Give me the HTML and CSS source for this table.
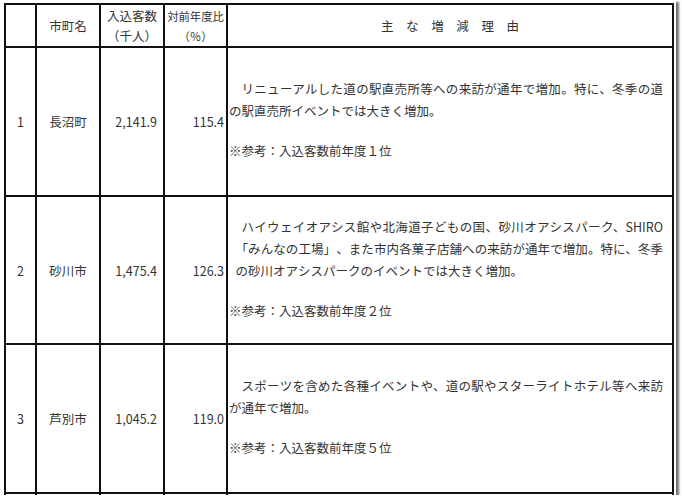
FILE: index.html
```html
<!DOCTYPE html>
<html lang="ja">
<head>
<meta charset="utf-8">
<title>入込客数 増加上位</title>
<link rel="stylesheet" href="styles.css">
</head>
<body>
<div class="frame">
  <table class="stats">
    <colgroup>
      <col class="c-rank">
      <col class="c-town">
      <col class="c-num">
      <col class="c-ratio">
      <col class="c-reason">
    </colgroup>
    <thead>
      <tr class="head">
        <th></th>
        <th>市町名</th>
        <th>入込客数<br>（千人）</th>
        <th class="narrow">対前年度比<br>（％）</th>
        <th class="spread">主な増減理由</th>
      </tr>
    </thead>
    <tbody>
      <tr class="row">
        <td class="rank">1</td>
        <td class="town">長沼町</td>
        <td class="num">2,141.9</td>
        <td class="ratio">115.4</td>
        <td class="reason">
          <p class="para">リニューアルした道の駅直売所等への来訪が通年で増加。特に、冬季の道の駅直売所イベントでは大きく増加。</p>
          <p class="note">※参考：入込客数前年度１位</p>
        </td>
      </tr>
      <tr class="row row-mid">
        <td class="rank">2</td>
        <td class="town">砂川市</td>
        <td class="num">1,475.4</td>
        <td class="ratio">126.3</td>
        <td class="reason">
          <p class="para para-shift">ハイウェイオアシス館や北海道子どもの国、砂川オアシスパーク、SHIRO「みんなの工場」、また市内各菓子店舗への来訪が通年で増加。特に、冬季の砂川オアシスパークのイベントでは大きく増加。</p>
          <p class="note">※参考：入込客数前年度２位</p>
        </td>
      </tr>
      <tr class="row">
        <td class="rank">3</td>
        <td class="town">芦別市</td>
        <td class="num">1,045.2</td>
        <td class="ratio">119.0</td>
        <td class="reason">
          <p class="para">スポーツを含めた各種イベントや、道の駅やスターライトホテル等へ来訪が通年で増加。</p>
          <p class="note">※参考：入込客数前年度５位</p>
        </td>
      </tr>
      <tr class="cut">
        <td></td><td></td><td></td><td></td><td></td>
      </tr>
    </tbody>
  </table>
</div>
</body>
</html>
```

FILE: styles.css
```css
html, body {
  margin: 0;
  padding: 0;
  background: #ffffff;
}

body {
  font-family: "Noto Sans CJK JP", "Noto Sans", sans-serif;
  color: #333333;
  font-size: 12.5px;
}

.frame {
  width: 676px;
  height: 495px;
  padding: 3px 0 0 4px;
  box-sizing: border-box;
  background: #ffffff;
  overflow: hidden;
  box-shadow: 3px 2px 2px rgba(0, 0, 0, 0.55);
}

.stats {
  border-collapse: collapse;
  table-layout: fixed;
  width: 670px;
  text-spacing-trim: space-all;
}

.c-rank { width: 31px; }
.c-town { width: 64px; }
.c-num { width: 64px; }
.c-ratio { width: 63px; }
.c-reason { width: 446px; }

.stats th,
.stats td {
  border: 2px solid #111111;
  padding: 0;
  vertical-align: middle;
}

.head {
  height: 41px;
}

.head th {
  font-weight: normal;
  line-height: 20px;
  text-align: center;
  padding-top: 1px;
}

.head th.narrow {
  font-size: 11.4px;
  letter-spacing: -0.1px;
}

.head th.spread {
  letter-spacing: 12.6px;
  padding-left: 12.6px;
}

.row {
  height: 149px;
}

.row-mid {
  height: 148px;
}

.rank,
.town {
  text-align: center;
}

.num {
  text-align: right;
  padding-right: 6px !important;
}

.ratio {
  text-align: right;
  padding-right: 2px !important;
}

.reason {
  padding: 0 9px 3px 1px !important;
  line-height: 22px;
}

.para {
  margin: 0;
  text-indent: 1em;
  text-align: justify;
}

.para-shift {
  margin-left: 6.5px;
  text-indent: 6px;
}

.note {
  margin: 18px 0 0;
}

.cut {
  height: 3px;
}
```
